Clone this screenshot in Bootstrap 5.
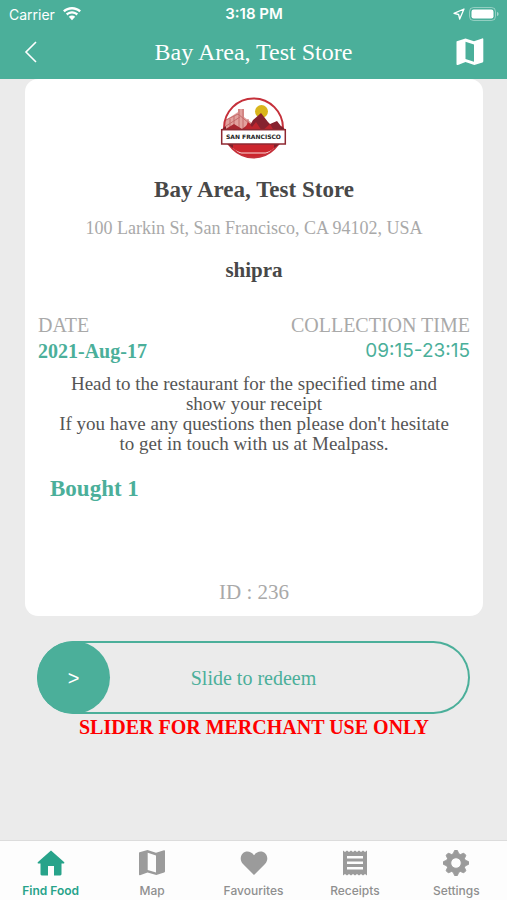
<!DOCTYPE html>
<html lang="en">
<head>
<meta charset="utf-8">
<meta name="viewport" content="width=device-width, initial-scale=1">
<title>Bay Area, Test Store</title>
<link href="https://cdn.jsdelivr.net/npm/bootstrap@5.3.0/dist/css/bootstrap.min.css" rel="stylesheet">
<style>
:root { --brand: #4baf9a; --brand-strong: #27a38a; --quiet: #a9a9a9; --ink: #484848; }
body { background: #ebebeb; font-family: "Liberation Serif", serif; }
.ui-sans { font-family: Inter, "Liberation Sans", sans-serif; }
.app-head { background: var(--brand); }
.status-row { height: 28px; font-size: 14px; padding: 0 8px 0 9px; }
.clock { font-size: 15px; }
.title-row { height: 51px; padding: 0 23px 3px; }
.title-row h1 { font-size: 24px; line-height: 28px; }
.side { flex: 1 1 0; }
.screen { padding: 0 24px 0 25px; }
.ticket { border-radius: 13px; padding: 18px 13px 10px; color: var(--ink); }
.store-name { font-size: 23px; line-height: 28px; margin-top: 17px; }
.store-address { font-size: 18px; line-height: 24px; margin-top: 12px; color: var(--quiet); }
.buyer { font-size: 21px; line-height: 28px; margin-top: 16px; }
.facts { font-size: 20px; line-height: 26px; margin-top: 28px; }
.facts dt { color: var(--quiet); }
.facts dd { color: var(--brand); }
.facts .ui-sans { font-size: 19px; }
.notes { font-size: 19px; line-height: 20px; margin-top: 10px; padding: 0 20px; color: #555; }
.bought { font-size: 23px; line-height: 28px; margin-top: 21px; padding-left: 12px; color: var(--brand); }
.ticket-id { font-size: 21px; line-height: 28px; margin-top: 75px; color: var(--quiet); }
.redeem { margin: 25px 13px 0 12px; font-size: 20px; color: var(--brand); }
.redeem > * { grid-area: 1 / 1; }
.redeem input { appearance: none; width: 100%; height: 73px; margin: 0; border-radius: 37px; box-shadow: inset 0 0 0 2px var(--brand); background: transparent; overflow: hidden; }
.redeem input::-webkit-slider-runnable-track { height: 73px; background: transparent; }
.redeem input::-webkit-slider-thumb { appearance: none; width: 73px; height: 73px; border-radius: 50%; background: var(--brand); }
.redeem label, .redeem .arrow { pointer-events: none; z-index: 1; }
.arrow { width: 73px; color: #fff; font-family: "Liberation Sans", sans-serif; }
.warning { font-size: 20px; line-height: 26px; color: #f00; }
.tab-bar { background: #fdfdfd; border-top: 1px solid #dcdcdc; height: 60px; }
.tab-bar a { color: #8f8f8f; font-size: 12px; line-height: 16px; padding-top: 8px; }
.tab-bar a svg { fill: #9b9b9b; margin-bottom: 6px; }
.tab-bar a.current { color: var(--brand-strong); }
.tab-bar a.current svg { fill: var(--brand-strong); }
</style>
<script src="https://cdn.jsdelivr.net/npm/bootstrap@5.3.0/dist/js/bootstrap.bundle.min.js"></script>
</head>
<body class="d-flex flex-column min-vh-100">
<header class="app-head text-white">
  <div class="status-row ui-sans d-flex align-items-center">
    <div class="side d-flex align-items-center gap-2">
      <span>Carrier</span>
      <svg width="18" height="14" viewBox="0 0 18 14" fill="#fff" aria-hidden="true"><path d="M9 0C5.500 0 2.400 1.300 0 3.500l1.700 1.800C3.700 3.500 6.200 2.500 9 2.500s5.300 1 7.300 2.800L18 3.500C15.600 1.300 12.500 0 9 0Z"/><path d="M9 4.200c-2.300 0-4.500.9-6.100 2.400l1.700 1.800C5.800 7.300 7.300 6.600 9 6.600s3.200.7 4.400 1.800l1.700-1.800C13.500 5.100 11.300 4.200 9 4.200Z"/><path d="M9 8.500c-1.200 0-2.300.5-3.200 1.200L9 13.200l3.200-3.500C11.300 9 10.200 8.500 9 8.500Z"/></svg>
    </div>
    <span class="clock fw-semibold">3:18 PM</span>
    <div class="side d-flex align-items-center justify-content-end gap-1">
      <svg width="12" height="12" viewBox="0 0 12 12" fill="none" stroke="#fff" stroke-width="1.300" stroke-linejoin="round" aria-hidden="true"><path d="M11 1 1 5.300l4.600 1.200L6.700 11Z"/></svg>
      <svg width="30" height="14" viewBox="0 0 30 14" aria-hidden="true"><rect x=".5" y=".5" width="26" height="13" rx="4" fill="none" stroke="#fff" stroke-opacity=".4"/><rect x="2.500" y="2.500" width="22" height="9" rx="2.200" fill="#fff"/><path d="M28 5v4c1.200-.4 1.600-1.200 1.600-2S29.200 5.400 28 5Z" fill="#fff" fill-opacity=".5"/></svg>
    </div>
  </div>
  <div class="title-row d-flex align-items-center">
    <div class="side d-flex"><button type="button" class="btn p-0 border-0 d-flex" aria-label="Back"><svg width="16" height="22" viewBox="0 0 16 22" fill="none" stroke="#fff" stroke-width="1.600"><path d="M13 1 3 11l10 10"/></svg></button></div>
    <h1 class="m-0 fw-normal text-nowrap">Bay Area, Test Store</h1>
    <div class="side d-flex justify-content-end"><button type="button" class="btn p-0 border-0 d-flex" aria-label="Map"><svg width="28" height="28" viewBox="0 0 28 28"><path fill="#fff" fill-rule="evenodd" d="M.8 3.200 9.500.5 18 3.300 26.200.4c.6-.2 1.100.1 1.100.7v22.200c0 .6-.3.900-.8 1.100L18.300 27 9.500 24 1.900 26.900C1.200 27.200.5 26.800.5 26V4c0-.4.1-.7.300-.8ZM9.500 3.800V20.900L18 23.800V6.600Z"/></svg></button></div>
  </div>
</header>

<main class="screen flex-grow-1">
  <section class="ticket bg-white text-center">
    <svg class="d-block mx-auto" width="68" height="62" viewBox="0 0 68 62" role="img" aria-label="San Francisco">
      <defs><clipPath id="disc"><circle cx="33.500" cy="31" r="29.500"/></clipPath></defs>
      <circle cx="33.500" cy="31" r="29.500" fill="#fff"/>
      <g clip-path="url(#disc)">
        <circle cx="41.500" cy="14.500" r="6.500" fill="#d9b51c"/>
        <path d="M3 25 18 15v-3h6v8l8 6 10 2v12H3Z" fill="#e2a19e"/>
        <path d="M4 24 18 17l12 10M6 29l14-9M19 12v24M23 12v24M10 22v10M14 19v14M28 22v10" fill="none" stroke="#c46b6b" stroke-width="1"/>
        <path d="M4 33 14 27l8 5 8-6 4 7v5H4Z" fill="#a72731"/>
        <path d="M27 34 33 23l8-7 7 9 2 2 7-3 7 9v8H25Z" fill="#86222f"/>
        <path d="M24 34l4-9 4 5 4-5 6 9 8-7 4 7v4H24Z" fill="#bd252e"/>
        <path d="M3 44h62v18H3Z" fill="#cc252d"/>
        <path d="M10 49q5 6 11 7h25q6-1 11-7" fill="none" stroke="#f7d9d7" stroke-width="1.200"/>
      </g>
      <circle cx="33.500" cy="31" r="29.500" fill="none" stroke="#c5303a" stroke-width="2"/>
      <path d="m1 33 5-4v4Zm65 0-5-4v4ZM7 47l6 4v-4Zm53 0-6 4v-4Z" fill="#7c202a"/>
      <rect x="1.700" y="32.700" width="63.600" height="14.300" fill="#fff" stroke="#8f2832" stroke-width="1.500"/>
      <text x="33.500" y="42" text-anchor="middle" font-family="DejaVu Sans, sans-serif" font-size="6" font-weight="700" fill="#252525">SAN FRANCISCO</text>
    </svg>
    <h2 class="store-name fw-bold mb-0">Bay Area, Test Store</h2>
    <p class="store-address mb-0">100 Larkin St, San Francisco, CA 94102, USA</p>
    <p class="buyer fw-bold mb-0">shipra</p>
    <div class="facts d-flex justify-content-between">
      <dl class="text-start mb-0"><dt class="fw-normal">DATE</dt><dd class="fw-bold mb-0">2021-Aug-17</dd></dl>
      <dl class="text-end mb-0"><dt class="fw-normal">COLLECTION TIME</dt><dd class="ui-sans mb-0">09:15-23:15</dd></dl>
    </div>
    <p class="notes mb-0">Head to the restaurant for the specified time and<br>show your receipt<br>If you have any questions then please don't hesitate<br>to get in touch with us at Mealpass.</p>
    <p class="bought text-start fw-bold mb-0">Bought 1</p>
    <p class="ticket-id mb-0">ID : 236</p>
  </section>
  <div class="redeem d-grid align-items-center">
    <input type="range" id="redeem" min="0" max="100" value="0">
    <label for="redeem" class="text-center">Slide to redeem</label>
    <span class="arrow text-center" aria-hidden="true">&gt;</span>
  </div>
  <p class="warning text-center fw-bold mb-0">SLIDER FOR MERCHANT USE ONLY</p>
</main>

<nav class="tab-bar ui-sans d-flex sticky-bottom" aria-label="Main">
  <a href="#find" class="current side d-flex flex-column align-items-center text-decoration-none fw-semibold" aria-current="page"><svg width="28" height="28" viewBox="0 0 28 28"><path d="M14 1.500 27 13c.7.700.4 1.600-.6 1.600H24.500V25c0 .9-.5 1.400-1.300 1.400H17V17h-6v9.400H4.800c-.8 0-1.300-.5-1.300-1.400V14.600H1.600c-1 0-1.300-.9-.6-1.600Z"/></svg>Find Food</a>
  <a href="#map" class="side d-flex flex-column align-items-center text-decoration-none fw-medium"><svg width="28" height="28" viewBox="0 0 28 28"><path fill-rule="evenodd" d="M1.500 3.300 9.500 1 18 3.800l8-2.500c.6-.2 1 .1 1 .7v20.500c0 .5-.3.800-.8 1L18.300 26 9.500 23.400 2 26.200c-.6.200-1-.1-1-.7V4.100c0-.4.1-.7.500-.8ZM9.700 3.800V21L18 23.500V6.500Z"/></svg>Map</a>
  <a href="#favourites" class="side d-flex flex-column align-items-center text-decoration-none fw-medium"><svg width="28" height="28" viewBox="0 0 28 28"><path d="M14 26 3 15C-.2 11.600.2 7 2.700 4.500c3.100-3 8.200-2.500 11.300 1.700 3.100-4.200 8.200-4.700 11.300-1.700C27.800 7 28.200 11.600 25 15Z"/></svg>Favourites</a>
  <a href="#receipts" class="side d-flex flex-column align-items-center text-decoration-none fw-medium"><svg width="28" height="28" viewBox="0 0 28 28"><path fill-rule="evenodd" d="m2 1.500 2 1.500 2-1.500L8 3l2-1.500L12 3l2-1.500L16 3l2-1.500L20 3l2-1.500L24 3l2-1.500v25L24 25l-2 1.500L20 25l-2 1.500L16 25l-2 1.500L12 25l-2 1.500L8 25l-2 1.500L4 25l-2 1.500ZM6 7v2.500h16V7Zm0 5.500V15h16v-2.500ZM6 18v2.500h16V18Z"/></svg>Receipts</a>
  <a href="#settings" class="side d-flex flex-column align-items-center text-decoration-none fw-medium"><svg width="28" height="28" viewBox="0 1 28 28"><path fill-rule="evenodd" stroke="#9b9b9b" stroke-linejoin="round" d="m12.600 2.500h2.800l1.300 3.200 1.800.8 3.300-1.300 2 2-1.300 3.300.8 1.800 3.200 1.300v2.800l-3.200 1.300-.8 1.800 1.300 3.300-2 2-3.300-1.300-1.800.8-1.300 3.200h-2.800l-1.300-3.200-1.800-.8-3.300 1.300-2-2 1.300-3.300-.8-1.800-3.200-1.300v-2.800l3.200-1.300.8-1.800-1.300-3.300 2-2 3.300 1.300 1.800-.8ZM14 9.700a5.300 5.300 0 1 0 0 10.600 5.300 5.300 0 0 0 0-10.600Z"/></svg>Settings</a>
</nav>
</body>
</html>
